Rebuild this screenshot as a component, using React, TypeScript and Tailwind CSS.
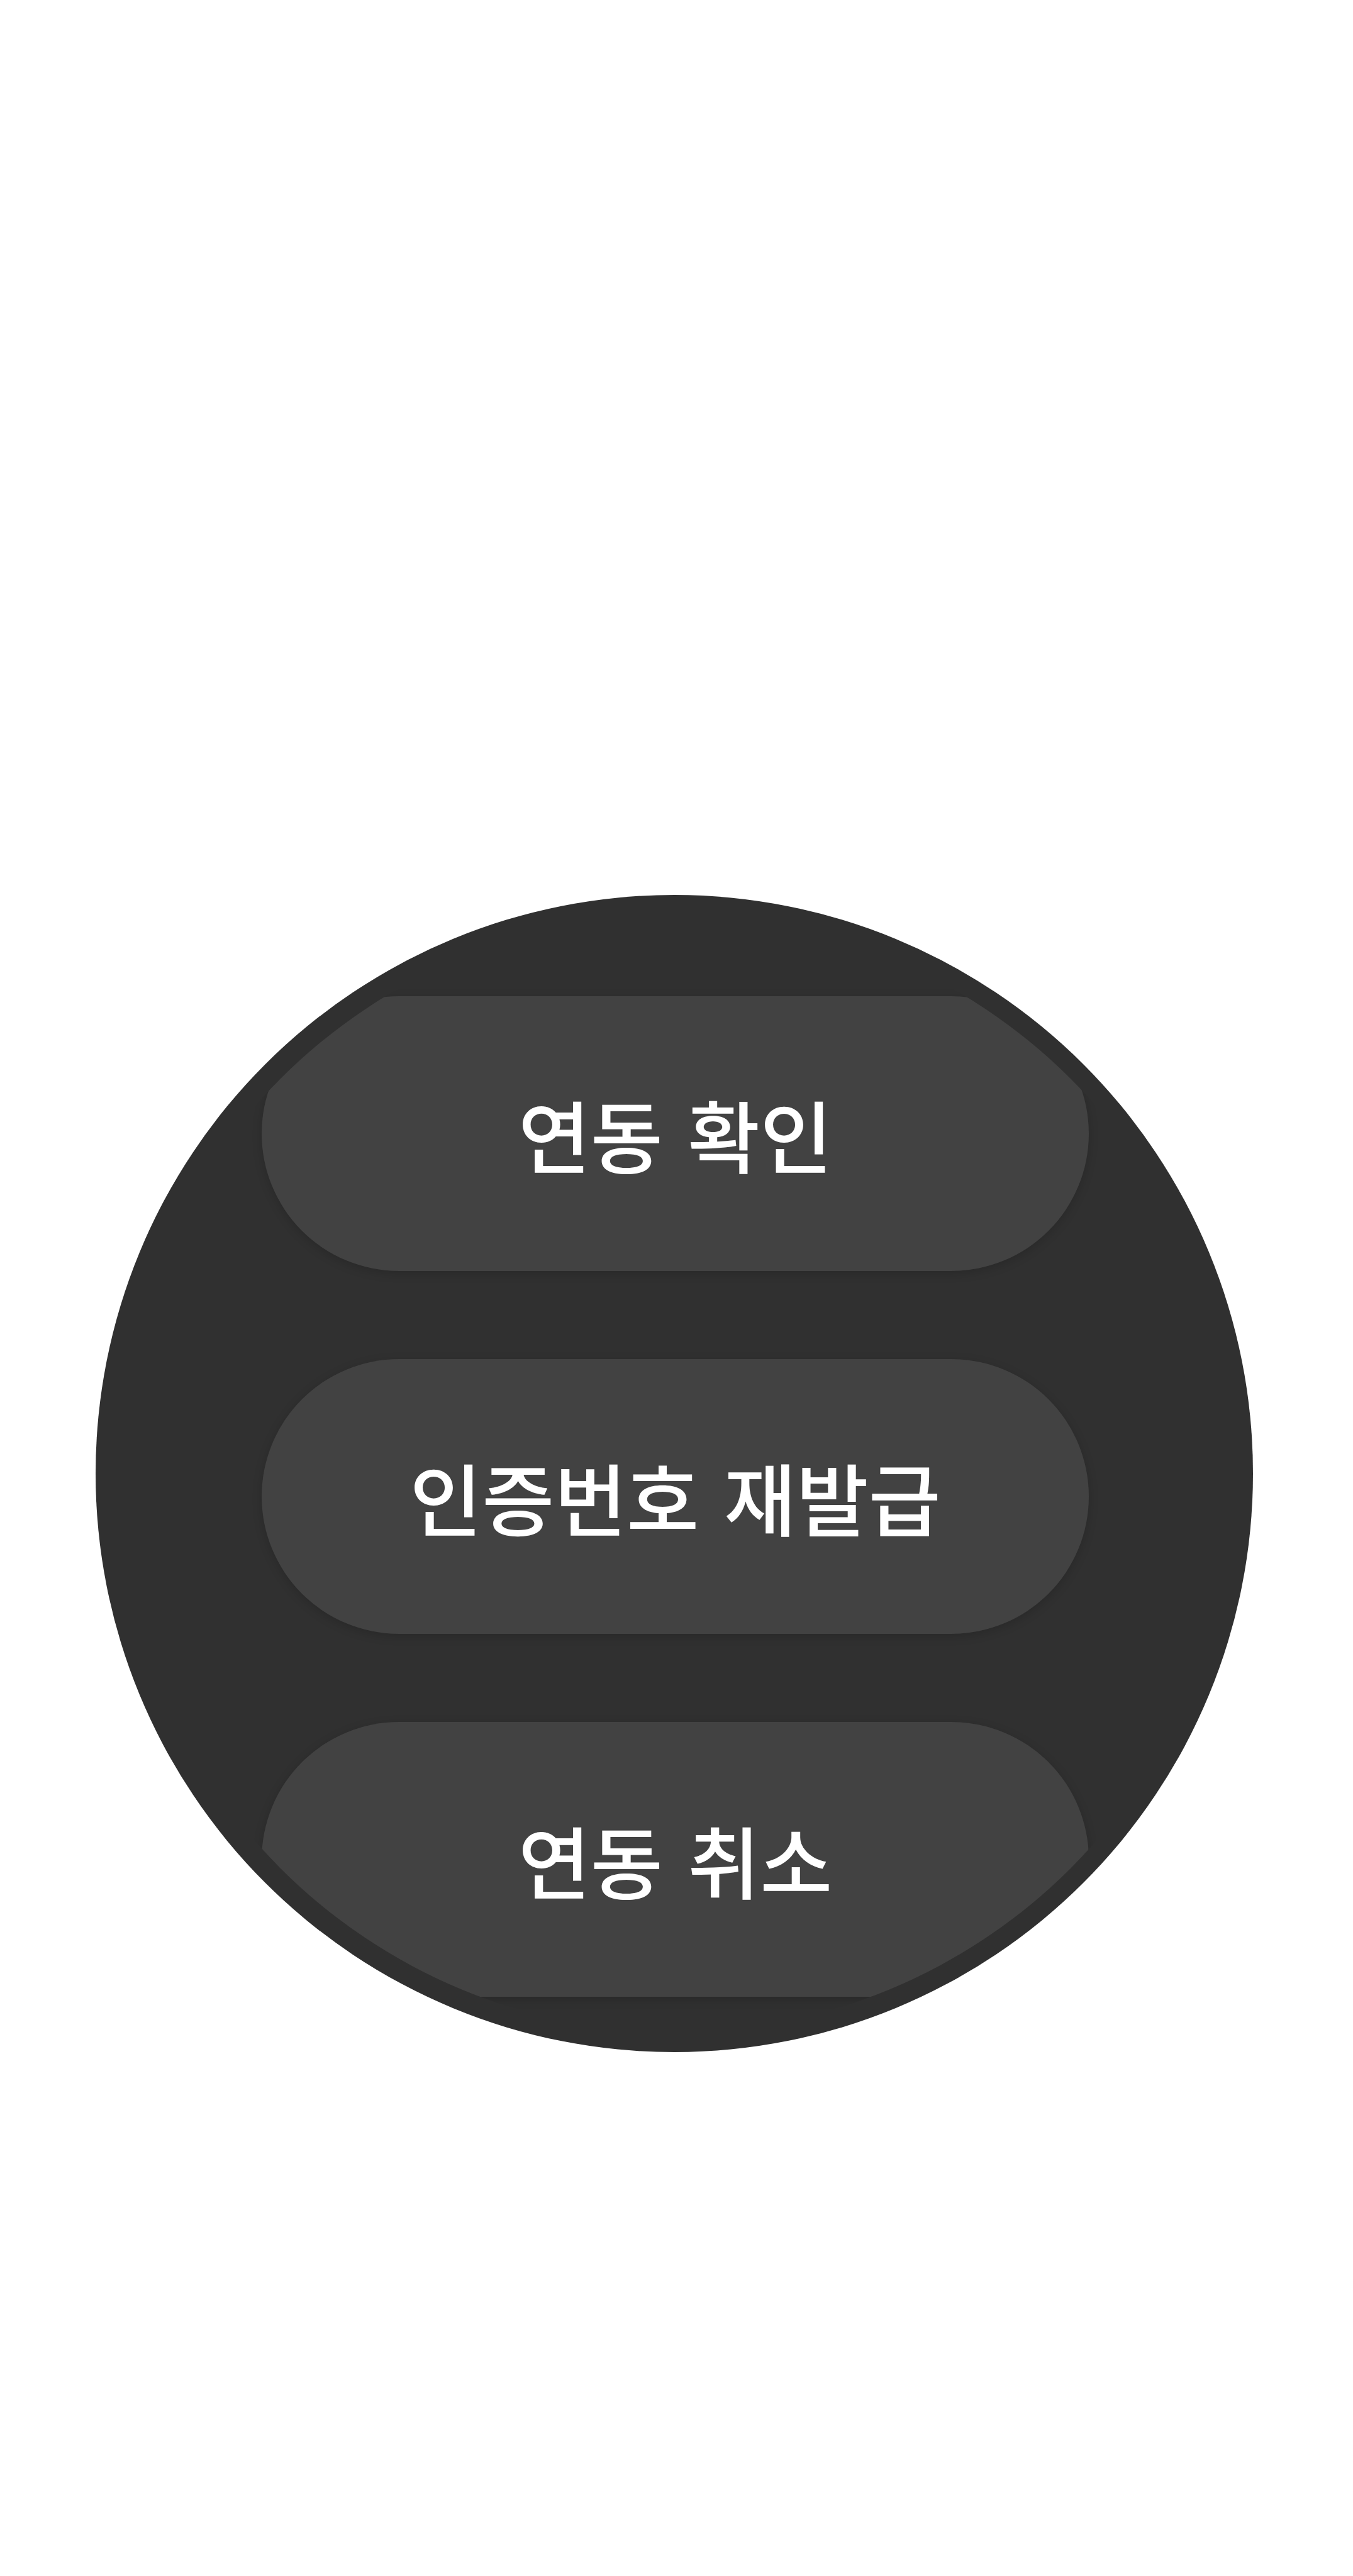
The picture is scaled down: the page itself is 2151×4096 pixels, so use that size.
const actions = ["연동 확인", "인증번호 재발급", "연동 취소"];

export default function App() {
  return (
    <main className="flex min-h-screen items-start justify-center bg-white pt-[1423px] pr-2 font-['DejaVu_Sans','Noto_Sans_CJK_KR',sans-serif]">
      <section
        aria-label="연동"
        className="aspect-square w-full max-w-[1840px] rounded-full bg-[#303030] py-8 pr-[30px] pl-[34px]"
      >
        <div className="flex aspect-square w-full flex-col items-center gap-[140px] overflow-hidden rounded-full pt-[129px]">
          {actions.map((label) => (
            <button
              key={label}
              type="button"
              className="h-[437px] w-[74%] shrink-0 rounded-full bg-[#424242] pt-5 text-[125px] leading-[180px] font-medium text-white shadow-[0_4px_16px_rgba(0,0,0,0.16)]"
            >
              {label}
            </button>
          ))}
        </div>
      </section>
    </main>
  );
}
